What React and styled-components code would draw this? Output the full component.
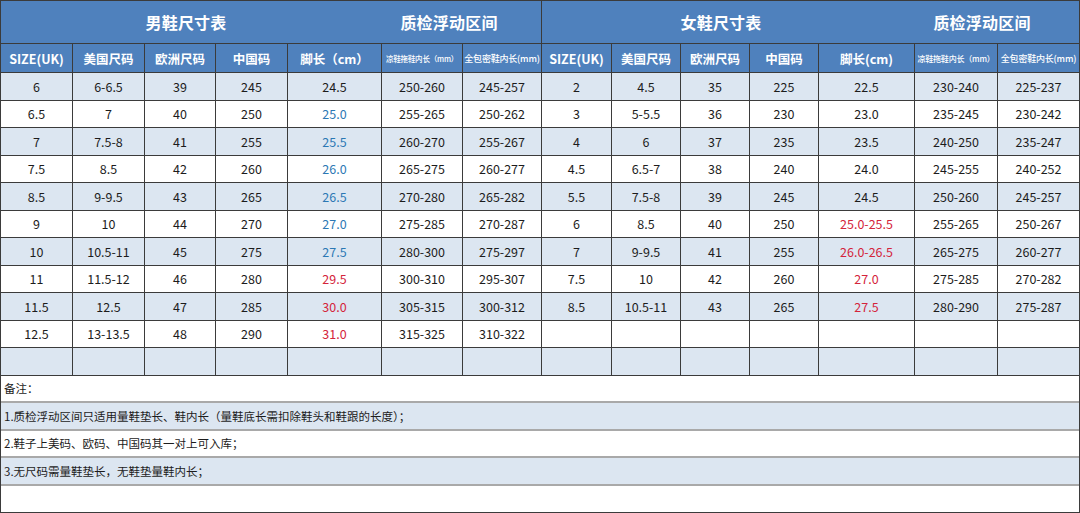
import React from "react";
import styled, { createGlobalStyle } from "styled-components";

const GlobalStyle = createGlobalStyle`
  html, body {
    margin: 0;
    padding: 0;
    background: #ffffff;
  }
  body {
    font-family: "Noto Sans CJK SC", "Noto Sans", sans-serif;
  }
`;

const LINE = "#3b3b3b";
const BLUE = "#4f81bd";
const SHADE = "#dce6f1";

const TONES = {
  plain: "#1c1c1c",
  blue: "#2b78b4",
  red: "#d4243b",
};

const Sheet = styled.div`
  width: 1080px;
  height: 513px;
  box-sizing: border-box;
  border: 1px solid ${LINE};
  overflow: hidden;
  display: flex;
  flex-direction: column;
`;

const Tables = styled.div`
  display: flex;
  border-bottom: 1px solid ${LINE};
`;

const SizeGrid = styled.div`
  display: grid;
  grid-template-columns: ${(p) => p.$cols};
  grid-template-rows: 42px 28px repeat(11, 26.5px);
  gap: 1px;
  background: ${LINE};
  border-right: ${(p) => (p.$divider ? `1px solid ${LINE}` : "none")};
`;

const TitleBar = styled.div`
  grid-column: 1 / -1;
  display: grid;
  grid-template-columns: ${(p) => p.$split} 1fr;
  background: ${BLUE};
  color: #ffffff;
`;

const Title = styled.div`
  display: flex;
  align-items: center;
  justify-content: center;
  padding-right: ${(p) => p.$shift || 0}px;
  font-size: 16px;
  font-weight: 700;
  letter-spacing: 0.2px;
`;

const HeadCell = styled.div`
  display: flex;
  align-items: center;
  justify-content: center;
  background: ${BLUE};
  color: #ffffff;
  font-size: ${(p) => p.$size || 12.5}px;
  font-weight: ${(p) => (p.$size ? 500 : 700)};
  letter-spacing: ${(p) => (p.$size ? "-0.2px" : "0")};
  white-space: nowrap;
  overflow: hidden;
`;

const Cell = styled.div`
  display: flex;
  align-items: center;
  justify-content: center;
  background: ${(p) => (p.$shade ? SHADE : "#ffffff")};
  color: ${(p) => TONES[p.$tone || "plain"]};
  font-size: 12.5px;
`;

const Notes = styled.div`
  display: flex;
  flex-direction: column;
  flex: 1;
`;

const NoteRow = styled.div`
  height: 25.5px;
  display: flex;
  align-items: center;
  padding-left: 3px;
  background: ${(p) => (p.$shade ? SHADE : "#ffffff")};
  border-top: ${(p) => (p.$first ? "none" : "2px solid #a9a9a9")};
  color: #1c1c1c;
  font-size: 11.5px;
  &:last-child {
    flex: 1;
  }
`;

const menRows = [
  ["6", "6-6.5", "39", "245", "24.5", "250-260", "245-257", "plain"],
  ["6.5", "7", "40", "250", "25.0", "255-265", "250-262", "blue"],
  ["7", "7.5-8", "41", "255", "25.5", "260-270", "255-267", "blue"],
  ["7.5", "8.5", "42", "260", "26.0", "265-275", "260-277", "blue"],
  ["8.5", "9-9.5", "43", "265", "26.5", "270-280", "265-282", "blue"],
  ["9", "10", "44", "270", "27.0", "275-285", "270-287", "blue"],
  ["10", "10.5-11", "45", "275", "27.5", "280-300", "275-297", "blue"],
  ["11", "11.5-12", "46", "280", "29.5", "300-310", "295-307", "red"],
  ["11.5", "12.5", "47", "285", "30.0", "305-315", "300-312", "red"],
  ["12.5", "13-13.5", "48", "290", "31.0", "315-325", "310-322", "red"],
];

const womenRows = [
  ["2", "4.5", "35", "225", "22.5", "230-240", "225-237", "plain"],
  ["3", "5-5.5", "36", "230", "23.0", "235-245", "230-242", "plain"],
  ["4", "6", "37", "235", "23.5", "240-250", "235-247", "plain"],
  ["4.5", "6.5-7", "38", "240", "24.0", "245-255", "240-252", "plain"],
  ["5.5", "7.5-8", "39", "245", "24.5", "250-260", "245-257", "plain"],
  ["6", "8.5", "40", "250", "25.0-25.5", "255-265", "250-267", "red"],
  ["7", "9-9.5", "41", "255", "26.0-26.5", "265-275", "260-277", "red"],
  ["7.5", "10", "42", "260", "27.0", "275-285", "270-282", "red"],
  ["8.5", "10.5-11", "43", "265", "27.5", "280-290", "275-287", "red"],
];

const notes = [
  "备注：",
  "1.质检浮动区间只适用量鞋垫长、鞋内长（量鞋底长需扣除鞋头和鞋跟的长度）；",
  "2.鞋子上美码、欧码、中国码其一对上可入库；",
  "3.无尺码需量鞋垫长，无鞋垫量鞋内长；",
  "",
];

function SizeTable({ cols, split, title, qcShift, footLabel, sandalSize, rows, divider }) {
  const filled = [...rows];
  while (filled.length < 11) filled.push(["", "", "", "", "", "", "", "plain"]);

  return (
    <SizeGrid $cols={cols} $divider={divider}>
      <TitleBar $split={split}>
        <Title>{title}</Title>
        <Title $shift={qcShift}>质检浮动区间</Title>
      </TitleBar>
      <HeadCell>SIZE(UK)</HeadCell>
      <HeadCell>美国尺码</HeadCell>
      <HeadCell>欧洲尺码</HeadCell>
      <HeadCell>中国码</HeadCell>
      <HeadCell>{footLabel}</HeadCell>
      <HeadCell $size={sandalSize}>凉鞋拖鞋内长（mm）</HeadCell>
      <HeadCell $size={9}>全包密鞋内长(mm)</HeadCell>
      {filled.map((row, i) =>
        row.slice(0, 7).map((value, j) => (
          <Cell key={`${i}-${j}`} $shade={i % 2 === 0} $tone={j === 4 ? row[7] : "plain"}>
            {value}
          </Cell>
        ))
      )}
    </SizeGrid>
  );
}

export default function App() {
  return (
    <>
      <GlobalStyle />
      <Sheet>
        <Tables>
          <SizeTable
            cols="71px 71px 70px 71px 93px 80px 78px"
            split="370px"
            title="男鞋尺寸表"
            qcShift={14}
            footLabel="脚长（cm）"
            sandalSize={7.5}
            rows={menRows}
            divider
          />
          <SizeTable
            cols="69px 68px 68px 68px 95px 82px 81px"
            split="358px"
            title="女鞋尺寸表"
            qcShift={15}
            footLabel="脚长(cm)"
            sandalSize={8}
            rows={womenRows}
          />
        </Tables>
        <Notes>
          {notes.map((text, i) => (
            <NoteRow key={i} $first={i === 0} $shade={i % 2 === 1}>
              {text}
            </NoteRow>
          ))}
        </Notes>
      </Sheet>
    </>
  );
}
